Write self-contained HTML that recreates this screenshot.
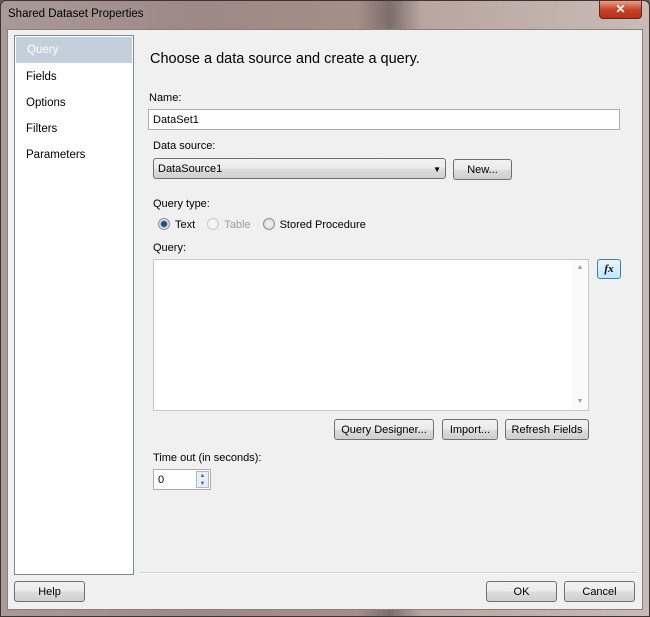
<!DOCTYPE html>
<html><head><style>
*{box-sizing:border-box;margin:0;padding:0}
body{width:650px;height:617px;overflow:hidden;font-family:"Liberation Sans",sans-serif;font-size:11px;color:#000;background:#6a5a55}
.frame{position:absolute;left:0;top:0;width:650px;height:617px;border-radius:6px 6px 0 0;background:linear-gradient(90deg,#a99a97 0%,#9d8985 30%,#a58e88 55%,#7d6e6a 60%,#b8a6a0 65%,#c9bbb6 100%);border:1px solid #3d3431}
.title{position:absolute;left:8px;top:8px;font-size:11.5px;color:#000}
.close{position:absolute;left:599px;top:0px;width:43px;height:19px;border-radius:0 0 4px 4px;background:linear-gradient(#e8a08c,#c8432a 50%,#b8301a);border:1px solid #5a2a20;color:#fff;font-weight:bold;text-align:center;font-size:12px;line-height:17px}
.client{position:absolute;left:8px;top:30px;width:634px;height:579px;background:#f0f0f0;box-shadow:0 0 0 1px #8a7f7b}
.abs{position:absolute}
.nav{left:6px;top:5px;width:120px;height:540px;background:#fff;border:1px solid #828790}
.nav div{height:26px;line-height:26px;padding-left:11px;font-size:11.5px}
.nav .sel{background:#c3d0dc;color:#fff;margin:1px}
.btn{position:absolute;height:21px;border:1px solid #707070;border-radius:3px;background:linear-gradient(#f2f2f2,#ebebeb 50%,#dddddd 51%,#cfcfcf);text-align:center;line-height:21px;font-size:11px}
.input{position:absolute;background:#fff;border:1px solid #abadb3;height:21px;line-height:20px;padding-left:4px;font-size:11px}
.lbl{position:absolute;font-size:11px}
.radio{display:inline-block;width:12px;height:12px;border-radius:50%;border:1px solid #8f8f8f;background:radial-gradient(#f4f4f4,#d8d8d8);vertical-align:-2px;margin-right:5px;position:relative}
</style></head><body>
<div class="frame"></div>
<div class="title">Shared Dataset Properties</div>
<div class="close">✕</div>
<div class="client">
  <div class="abs nav"><div class="sel">Query</div><div>Fields</div><div>Options</div><div>Filters</div><div>Parameters</div></div>
  <div class="lbl" style="left:142px;top:21px;font-size:14.5px">Choose a data source and create a query.</div>
  <div class="lbl" style="left:141px;top:62px">Name:</div>
  <div class="input" style="left:140px;top:79px;width:472px">DataSet1</div>
  <div class="lbl" style="left:145px;top:110px">Data source:</div>
  <div class="btn" style="left:145px;top:128px;width:293px;text-align:left;padding-left:4px">DataSource1<span style="position:absolute;right:4px;font-size:8px">▼</span></div>
  <div class="btn" style="left:445px;top:129px;width:59px">New...</div>
  <div class="lbl" style="left:145px;top:168px">Query type:</div>
  <div class="lbl" style="left:150px;top:188px"><span class="radio" style="background:radial-gradient(#1a4a80 30%,#5a8ac0 45%,#e8e8e8 55%)"></span>Text <span class="radio" style="margin-left:9px;border-color:#c8c8c8;background:#f4f4f4"></span><span style="color:#a0a0a0">Table</span> <span class="radio" style="margin-left:9px"></span>Stored Procedure</div>
  <div class="lbl" style="left:145px;top:212px">Query:</div>
  <div class="abs" style="left:145px;top:229px;width:436px;height:152px;background:#fff;border:1px solid #c8c8c8"><div style="position:absolute;right:0;top:0;width:16px;height:150px;background:#fafafa;color:#a0a0a0;font-size:7px;text-align:center;line-height:16px">▲<div style="position:absolute;bottom:0;width:16px">▼</div></div></div>
  <div class="btn" style="left:589px;top:229px;width:24px;height:20px;line-height:18px;border-color:#3c7fb1;background:linear-gradient(#eaf6fd,#bee6fd);font-style:italic;font-weight:bold;font-family:'Liberation Serif',serif">fx</div>
  <div class="btn" style="left:326px;top:389px;width:100px">Query Designer...</div>
  <div class="btn" style="left:434px;top:389px;width:56px">Import...</div>
  <div class="btn" style="left:497px;top:389px;width:84px">Refresh Fields</div>
  <div class="lbl" style="left:145px;top:422px">Time out (in seconds):</div>
  <div class="input" style="left:145px;top:439px;width:58px;height:21px">0<div style="position:absolute;right:1px;top:1px;width:13px;height:17px;font-size:6px;line-height:8px;color:#4a6a9a;text-align:center;background:#e8eef6;border:1px solid #b0b8c8">▲<br>▼</div></div>
  <div class="abs" style="left:132px;top:542px;width:497px;height:2px;border-top:1px solid #d0d0d0;border-bottom:1px solid #fff"></div>
  <div class="btn" style="left:6px;top:551px;width:71px">Help</div>
  <div class="btn" style="left:478px;top:551px;width:71px">OK</div>
  <div class="btn" style="left:556px;top:551px;width:71px">Cancel</div>
</div>
</body></html>
